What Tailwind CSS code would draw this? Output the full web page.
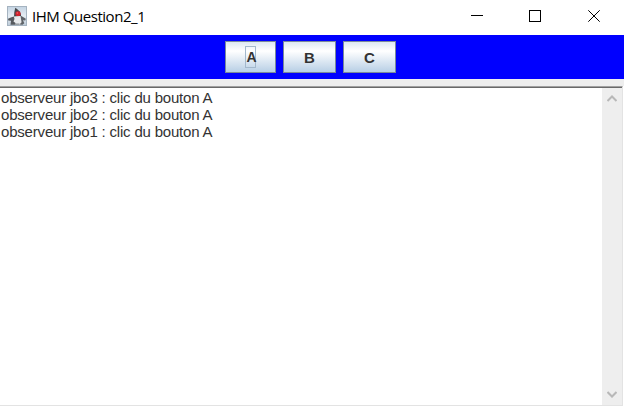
<!DOCTYPE html>
<html lang="fr">
<head>
<meta charset="utf-8">
<title>IHM Question2_1</title>
<script src="https://cdn.jsdelivr.net/npm/@tailwindcss/browser@4"></script>
</head>
<body class="w-[624px] h-[406px] overflow-hidden bg-white flex flex-col font-['Liberation_Sans',Arial,sans-serif] text-[#333333]">
<header class="h-[35px] shrink-0 flex items-start">
  <svg class="w-5 h-5 mt-[6px] ml-[7px] shrink-0" viewBox="0 0 20 20">
    <defs><linearGradient id="g" x1="0" y1="0" x2="0" y2="1"><stop offset="0" stop-color="#c3d3e2"/><stop offset=".5" stop-color="#e6edf3"/><stop offset="1" stop-color="#bccbd8"/></linearGradient></defs>
    <rect x=".5" y=".5" width="19" height="19" fill="url(#g)" stroke="#a5b3c0"/>
    <path d="M8.3 1.8 10 3 12.5 5.3 14 8.2 14 10.5 7 11 7.3 6Z" fill="#45484d"/>
    <path d="M6.5 10.5 14 10 16 13 15.3 17.5 13 18.5H7L5 17 5.5 13Z" fill="#e8eaec"/>
    <path d="M1 12.8 4.5 11.2 6.8 10.5 7.5 13 6.5 15.5 8.5 17 8.5 18.8H3.5L4 14.8 1.3 14.5Z" fill="#565a5f"/>
    <path d="M13.5 9.5 16 11 18.8 12.8 18.3 14.5 16 14.2 17.3 17.3 15.5 18.8 12.5 18.5 14.6 16.3 14 13Z" fill="#5f6368"/>
    <path d="M8.5 17.5H12.5V18.8H8.5Z" fill="#8b9095"/>
    <ellipse cx="11" cy="7.7" rx="2.6" ry="2.4" fill="#d3222d"/>
    <circle cx="10.3" cy="7" r=".8" fill="#ed6970"/>
  </svg>
  <h1 class="ml-[5px] mt-[6px] w-[220px] text-[15px] leading-[20px] tracking-[-0.46px] whitespace-nowrap text-black font-['Open_Sans','Noto_Sans',sans-serif]">IHM Question2_1</h1>
  <svg class="ml-auto mr-6 mt-[10px] w-[129px] h-3 shrink-0" viewBox="0 0 129 12" fill="none" stroke="#000">
    <path d="M0 5.5H12" shape-rendering="crispEdges"/>
    <rect x="58.5" y=".5" width="11" height="11" shape-rendering="crispEdges"/>
    <path d="M117.3.3 128.7 11.7M128.7.3 117.3 11.7"/>
  </svg>
</header>
<div class="h-[44px] shrink-0 bg-[#0000ff] pt-[6px] pl-[225px] flex gap-[7px] text-[15px] font-bold leading-[17px]">
  <button class="w-[51px] h-8 border border-[#7a8a99] bg-linear-to-b from-[#dde8f3] via-white via-30% to-[#b8cfe5] flex justify-center pt-1"><span class="w-[11px] h-[22px] border border-[#a3b8cc] flex justify-center items-center"><span class="relative left-px text-[14px]">A</span></span></button>
  <button class="w-[53px] h-8 border border-[#7a8a99] bg-linear-to-b from-[#dde8f3] via-white via-30% to-[#b8cfe5] flex items-center justify-center">B</button>
  <button class="w-[53px] h-8 border border-[#7a8a99] bg-linear-to-b from-[#dde8f3] via-white via-30% to-[#b8cfe5] flex items-center justify-center">C</button>
</div>
<div class="h-[7px] shrink-0 bg-[#eeeeee]"></div>
<main class="h-[320px] w-[623px] shrink-0 border-t border-t-[#a0a0a0] border-r border-r-[#e3e3e3] border-b border-b-[#e3e3e3] flex">
  <div class="w-[602px] border-t border-[#696969] pl-px pt-px text-[15px] leading-[17px] tracking-[-0.19px] whitespace-nowrap">
    <p>observeur jbo3 : clic du bouton A</p>
    <p>observeur jbo2 : clic du bouton A</p>
    <p>observeur jbo1 : clic du bouton A</p>
  </div>
  <div class="w-5 border-t border-[#696969] bg-[#eeeeee] flex flex-col justify-between items-center pt-[7px] pb-[7px]">
    <svg class="w-[10px] h-[7px]" viewBox="0 0 10 7" fill="none" stroke="#b8b8b8" stroke-width="2"><path d="M.5 6 5 1.5 9.5 6"/></svg>
    <svg class="w-[10px] h-[7px]" viewBox="0 0 10 7" fill="none" stroke="#b8b8b8" stroke-width="2"><path d="M.5 1 5 5.5 9.5 1"/></svg>
  </div>
</main>
</body>
</html>
